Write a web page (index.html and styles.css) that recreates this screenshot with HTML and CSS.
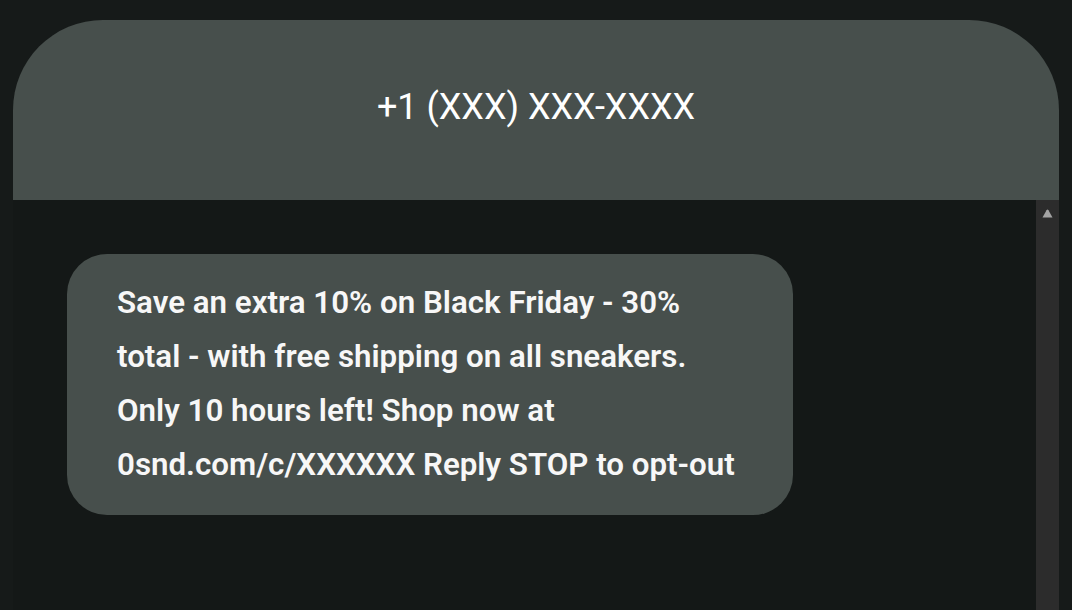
FILE: index.html
```html
<!DOCTYPE html>
<html>
<head>
<meta charset="utf-8">
<link rel="stylesheet" href="styles.css">
</head>
<body>
<div class="page">
  <div class="phone">
    <header class="header">
      <div class="number">+1 (XXX) XXX-XXXX</div>
    </header>
    <div class="thread">
      <div class="messages">
        <div class="bubble">Save an extra 10% on Black Friday - 30% total - with free shipping on all sneakers. Only 10 hours left! Shop now at 0snd.com/c/XXXXXX Reply STOP to opt-out</div>
      </div>
      <div class="scrollbar">
        <svg class="arrow" width="11" height="9" viewBox="0 0 11 9"><path d="M0.5 8.5 L4.5 1.2 Q5.5 0 6.5 1.2 L10.5 8.5 Z" fill="#a3a3a3"/></svg>
      </div>
    </div>
  </div>
</div>
</body>
</html>
```

FILE: styles.css
```css
html, body {
  margin: 0;
  padding: 0;
  background: #171b1a;
  height: 100%;
  overflow: hidden;
}
.page {
  height: 610px;
  padding: 20px 13px 0 13px;
  box-sizing: border-box;
  background: #161a19;
  font-family: Roboto, "Liberation Sans", sans-serif;
}
.phone {
  display: flex;
  flex-direction: column;
  height: 100%;
}
.header {
  height: 180px;
  background: #474f4c;
  border-radius: 90px 90px 0 0;
  display: flex;
  align-items: center;
  justify-content: center;
  padding-bottom: 7px;
  box-sizing: border-box;
  flex: none;
}
.number {
  color: #ffffff;
  font-size: 36px;
  font-weight: 400;
}
.thread {
  flex: 1;
  display: flex;
}
.messages {
  flex: 1;
  background: #141817;
  padding: 54px 0 0 54px;
}
.bubble {
  width: 726px;
  box-sizing: border-box;
  background: #474f4c;
  border-radius: 40px;
  padding: 22px 50px 23px 50px;
  color: #f7f7f7;
  font-size: 31.3px;
  font-weight: 600;
  line-height: 54px;
}
.scrollbar {
  width: 23px;
  background: #2c2c2c;
  display: flex;
  justify-content: center;
  padding-top: 9px;
  box-sizing: border-box;
}
.arrow {
  display: block;
}
```
